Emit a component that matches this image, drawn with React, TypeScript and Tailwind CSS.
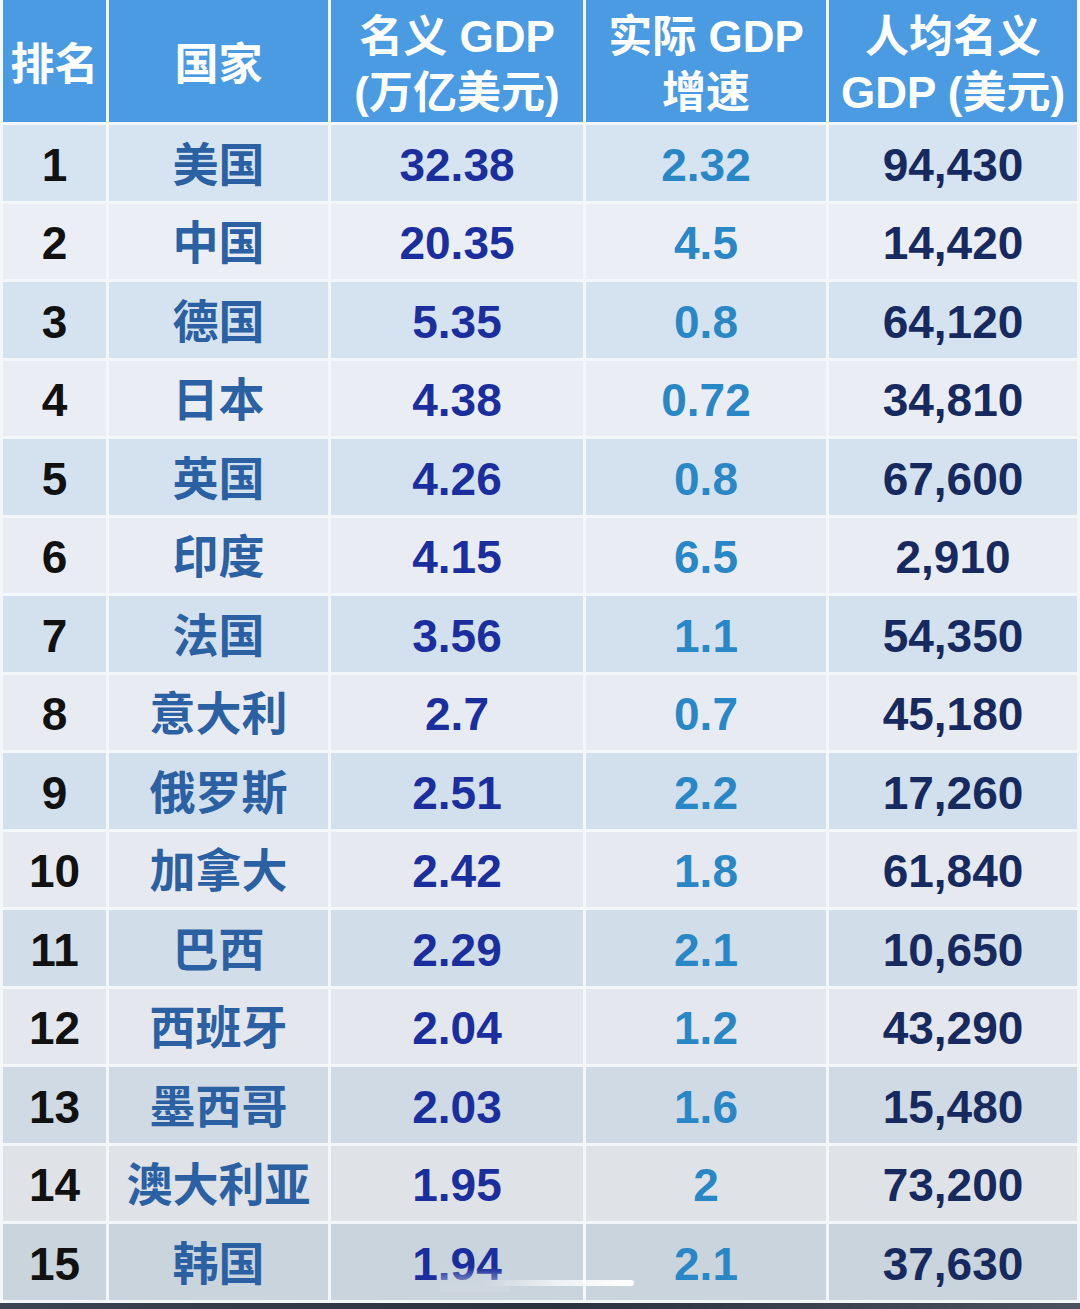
import React from 'react';

type Row = {
    rank: number;
    country: string;
    nominal: string;
    growth: string;
    perCapita: string;
};

const rows: Row[] = [
    { rank: 1, country: '美国', nominal: '32.38', growth: '2.32', perCapita: '94,430' },
    { rank: 2, country: '中国', nominal: '20.35', growth: '4.5', perCapita: '14,420' },
    { rank: 3, country: '德国', nominal: '5.35', growth: '0.8', perCapita: '64,120' },
    { rank: 4, country: '日本', nominal: '4.38', growth: '0.72', perCapita: '34,810' },
    { rank: 5, country: '英国', nominal: '4.26', growth: '0.8', perCapita: '67,600' },
    { rank: 6, country: '印度', nominal: '4.15', growth: '6.5', perCapita: '2,910' },
    { rank: 7, country: '法国', nominal: '3.56', growth: '1.1', perCapita: '54,350' },
    { rank: 8, country: '意大利', nominal: '2.7', growth: '0.7', perCapita: '45,180' },
    { rank: 9, country: '俄罗斯', nominal: '2.51', growth: '2.2', perCapita: '17,260' },
    { rank: 10, country: '加拿大', nominal: '2.42', growth: '1.8', perCapita: '61,840' },
    { rank: 11, country: '巴西', nominal: '2.29', growth: '2.1', perCapita: '10,650' },
    { rank: 12, country: '西班牙', nominal: '2.04', growth: '1.2', perCapita: '43,290' },
    { rank: 13, country: '墨西哥', nominal: '2.03', growth: '1.6', perCapita: '15,480' },
    { rank: 14, country: '澳大利亚', nominal: '1.95', growth: '2', perCapita: '73,200' },
    { rank: 15, country: '韩国', nominal: '1.94', growth: '2.1', perCapita: '37,630' },
];

// row tints drift a bit greyer toward the bottom of the photo
const rowBg = [
    'bg-[#d6e3f0]', 'bg-[#ebeff5]', 'bg-[#d5e3f0]', 'bg-[#eaeef4]', 'bg-[#d4e2ef]',
    'bg-[#e9edf3]', 'bg-[#d3e1ee]', 'bg-[#e8ecf2]', 'bg-[#d2dfec]', 'bg-[#e6eaf0]',
    'bg-[#d1dde9]', 'bg-[#e4e8ee]', 'bg-[#cfdae5]', 'bg-[#dfe3e7]', 'bg-[#c9d4dd]',
];

const font = { fontFamily: '"Liberation Sans", "Noto Sans CJK SC", Arial, sans-serif' };

function HeaderCell({ children }: { children: React.ReactNode }) {
    return (
        <div className="flex flex-col items-center justify-center bg-[#4b9be2] pt-2 text-[44px] font-bold leading-[56px] text-white">
            {children}
        </div>
    );
}

function Cell({ bg, className, children }: { bg: string; className: string; children: React.ReactNode }) {
    return (
        <div className={`flex items-center justify-center pt-1 text-[46px] font-bold leading-none ${bg} ${className}`}>
            {children}
        </div>
    );
}

export default function App() {
    return (
        <div className="w-[1080px] h-[1309px] overflow-hidden bg-[#f4f7fa]" style={font}>
            <div className="relative grid grid-cols-[103px_219px_252px_240px_248px] grid-rows-[122px_repeat(15,75.5px)] gap-[3px] px-[3px]">
                <HeaderCell>排名</HeaderCell>
                <HeaderCell>国家</HeaderCell>
                <HeaderCell>
                    <span>名义 GDP</span>
                    <span>(万亿美元)</span>
                </HeaderCell>
                <HeaderCell>
                    <span>实际 GDP</span>
                    <span>增速</span>
                </HeaderCell>
                <HeaderCell>
                    <span>人均名义</span>
                    <span>GDP (美元)</span>
                </HeaderCell>

                {rows.map((r, i) => (
                    <React.Fragment key={r.rank}>
                        <Cell bg={rowBg[i]} className="text-[#111111]">{r.rank}</Cell>
                        <Cell bg={rowBg[i]} className="text-[45px] text-[#2b60a3]">{r.country}</Cell>
                        <Cell bg={rowBg[i]} className="text-[#1b2e9e]">{r.nominal}</Cell>
                        <Cell bg={rowBg[i]} className="text-[#2a87c6]">{r.growth}</Cell>
                        <Cell bg={rowBg[i]} className="text-[#172a60]">{r.perCapita}</Cell>
                    </React.Fragment>
                ))}

                {/* blurred watermark smear over the last row */}
                <div className="absolute left-[440px] top-[1268px] h-[24px] w-[70px] bg-gradient-to-b from-transparent to-[#cfd8e0]/90" />
                <div className="absolute left-[482px] top-[1280px] h-[6px] w-[152px] rounded-sm bg-gradient-to-r from-transparent via-white/70 to-white" />
            </div>
            <div className="mt-[3px] h-[8px] bg-gradient-to-r from-[#3b4453] via-[#2a313d] to-[#4a5260]" />
        </div>
    );
}
